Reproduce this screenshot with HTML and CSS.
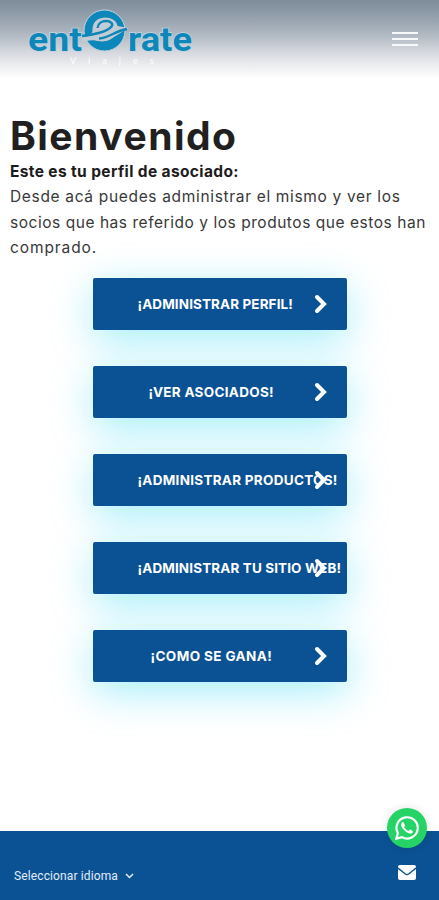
FILE: index.html
```html
<!DOCTYPE html>
<html lang="es">
<head>
    <meta charset="UTF-8" />
    <meta name="viewport" content="width=device-width, initial-scale=1.0"/>
    <title>Perfil de asociado</title>
    <link rel="stylesheet" href="styles.css">
</head>
<body>
<header class="header">
    <svg class="logo" width="174" height="66" viewBox="22 6 174 66">
        <g class="logo-text">
            <text x="28" y="50.500" textLength="54" lengthAdjust="spacingAndGlyphs">ent</text>
            <text x="128" y="50.500" textLength="64" lengthAdjust="spacingAndGlyphs">rate</text>
        </g>
        <!-- round emblem -->
        <circle cx="104.500" cy="30.500" r="20.500" fill="#0d87b9" stroke="#c3d5e0" stroke-width="1"/>
        <path d="M81 38C90 36 93 34 92.500 29C93 21 99 17.500 105 17.500C113 17.500 117 22 117.500 26L129 28C121 32 116 36 111 39C105 42.500 99 41.500 95 40.500C91 39.500 87 41 82 41.500Z" fill="#c3ccd5"/>
        <path d="M97.500 28C98 23 102 21 106 21C111 21 113.500 24 111.500 26.500C108 31.500 93 35 82 36" fill="none" stroke="#0d87b9" stroke-width="2.400"/>
        <path d="M99 38.500C111 37.500 114 31 127 29" fill="none" stroke="#0d87b9" stroke-width="2.400"/>
        <text class="logo-sub" x="70" y="63.500">Viajes</text>
    </svg>
    <button type="button" class="menu" aria-label="Menu">
        <span></span>
        <span></span>
        <span></span>
    </button>
</header>

<main class="content">
    <h1>Bienvenido</h1>
    <p class="intro">
        <strong>Este es tu perfil de asociado:</strong><br>
        <span class="line-1">Desde acá puedes administrar el mismo y ver los</span><br>
        <span class="line-2">socios que has referido y los produtos que estos han</span><br>
        <span class="line-3">comprado.</span>
    </p>
    <nav class="actions">
        <a class="btn" href="#"><span class="w-perfil">¡ADMINISTRAR PERFIL!</span>
            <svg class="arrow" viewBox="0 0 14 20"><path d="M3 3L10 10L3 17"/></svg></a>
        <a class="btn" href="#"><span class="w-asociados">¡VER ASOCIADOS!</span>
            <svg class="arrow" viewBox="0 0 14 20"><path d="M3 3L10 10L3 17"/></svg></a>
        <a class="btn" href="#"><span class="w-productos">¡ADMINISTRAR PRODUCTOS!</span>
            <svg class="arrow" viewBox="0 0 14 20"><path d="M3 3L10 10L3 17"/></svg></a>
        <a class="btn" href="#"><span class="w-sitio">¡ADMINISTRAR TU SITIO WEB!</span>
            <svg class="arrow" viewBox="0 0 14 20"><path d="M3 3L10 10L3 17"/></svg></a>
        <a class="btn" href="#"><span class="w-gana">¡COMO SE GANA!</span>
            <svg class="arrow" viewBox="0 0 14 20"><path d="M3 3L10 10L3 17"/></svg></a>
    </nav>
</main>

<footer class="footer">
    <button type="button" class="language">
        <span>Seleccionar idioma</span>
        <svg width="9" height="6" viewBox="0 0 9 6"><path d="M1 1L4.500 4.500L8 1" fill="none" stroke="#e3edf8" stroke-width="1.500"/></svg>
    </button>
    <a class="mail" href="#" aria-label="Correo">
        <svg width="18" height="15" viewBox="0 0 18 15">
            <rect width="18" height="15" rx="2" fill="#fff"/>
            <path d="M0 3L7 8.800Q9 10.300 11 8.800L18 3" fill="none" stroke="#0b5294" stroke-width="1.400"/>
        </svg>
    </a>
</footer>

<a class="whatsapp" href="#" aria-label="WhatsApp">
    <svg width="26" height="26" viewBox="0 0 24 24">
        <path d="M2.200 21.800L3.600 16.700A9.800 9.800 0 1 1 7.300 20.400Z" fill="none" stroke="#fff" stroke-width="2"/>
        <path d="M8.500 6.500C8 6.300 7.400 6.700 7 7.300C5.800 9.100 7.200 11.700 9.300 13.900C11.600 16.300 14.400 17.900 16.300 16.800C17.300 16.200 17.700 15.300 17.400 14.700L14.900 13.400C14.300 13.300 13.900 14.500 13.300 14.700C12 14.300 10.200 12.700 9.500 11.300C9.500 10.700 10.400 10.100 10.200 9.500Z" fill="#fff"/>
    </svg>
</a>
</body>
</html>
```
FILE: styles.css
```css
* {
  box-sizing: border-box;
}

body {
  margin: 0;
  height: 900px;
  display: flex;
  flex-direction: column;
  background: #fff;
  color: #202020;
  font-family: Inter, "Liberation Sans", sans-serif;
  overflow: hidden;
}

.header {
  height: 79px;
  flex: none;
  display: flex;
  justify-content: space-between;
  align-items: flex-start;
  padding: 6px 21px 0 22px;
  background: linear-gradient(#7f8d9a 0, #8c99a6 12px, #b1b9c2 35px, #d5d8de 52px, #f1f2f4 69px, #fff 79px);
}

.logo-text {
  font-family: Roboto, sans-serif;
  font-size: 34px;
  font-weight: 700;
  fill: #0d87b9;
  stroke: #c3d5e0;
  stroke-width: 1.6px;
  paint-order: stroke;
}

.logo-sub {
  font-family: Lato, sans-serif;
  font-size: 9px;
  letter-spacing: 12px;
  fill: #fff;
}

.menu {
  width: 26px;
  margin-top: 26px;
  padding: 0;
  border: none;
  background: none;
  display: flex;
  flex-direction: column;
  gap: 4px;
}

.menu span {
  height: 2px;
  background: #f7f9fb;
}

.content {
  flex: 1;
  padding: 33px 10px 0;
}

h1 {
  margin: 0 0 -1px;
  font-size: 39px;
  line-height: 48px;
  font-weight: 700;
  letter-spacing: 1.5px;
  white-space: nowrap;
}

.intro {
  margin: 0;
  font-size: 15.5px;
  line-height: 25.4px;
  white-space: nowrap;
  color: #383838;
}

.intro strong {
  color: #1c1c1c;
  letter-spacing: 0.37px;
}

.line-1 {
  letter-spacing: 0.67px;
}

.line-2 {
  letter-spacing: 0.54px;
}

.line-3 {
  letter-spacing: 0.9px;
}

.actions {
  display: flex;
  flex-direction: column;
  align-items: center;
  gap: 36px;
  margin-top: 17px;
}

.btn {
  position: relative;
  width: 254px;
  height: 52px;
  padding: 0 45px 0 45px;
  display: flex;
  align-items: center;
  border-radius: 2px;
  background: #0b5294;
  box-shadow: 0 10px 40px rgba(0, 207, 245, 0.36);
  color: #fff;
  font-size: 13.5px;
  font-weight: 700;
  text-decoration: none;
  white-space: nowrap;
}

.arrow {
  position: absolute;
  right: 19px;
  top: 16px;
  width: 14px;
  height: 20px;
  fill: none;
  stroke: #fff;
  stroke-width: 4;
  stroke-linecap: round;
}

.w-perfil {
  letter-spacing: 0.1px;
}

.w-asociados {
  margin-left: 11px;
  letter-spacing: 0.3px;
}

.w-productos {
  letter-spacing: 0.28px;
}

.w-sitio {
  letter-spacing: 0.12px;
}

.w-gana {
  margin-left: 13px;
  letter-spacing: 0.4px;
}

.footer {
  height: 69px;
  flex: none;
  display: flex;
  justify-content: space-between;
  align-items: flex-start;
  padding: 34px 23px 0 14px;
  background: #0b5294;
}

.language {
  display: flex;
  align-items: center;
  gap: 7px;
  padding: 0;
  border: none;
  background: none;
  color: #e3edf8;
  font-family: Roboto, sans-serif;
  font-size: 12px;
  letter-spacing: 0.12px;
  line-height: 22px;
}

.mail svg {
  display: block;
}

.whatsapp {
  position: absolute;
  right: 12px;
  top: 808px;
  width: 40px;
  height: 40px;
  display: flex;
  justify-content: center;
  align-items: center;
  border-radius: 50%;
  background: #25d366;
  box-shadow: 0 0 10px rgba(0, 0, 0, 0.12);
}
```
